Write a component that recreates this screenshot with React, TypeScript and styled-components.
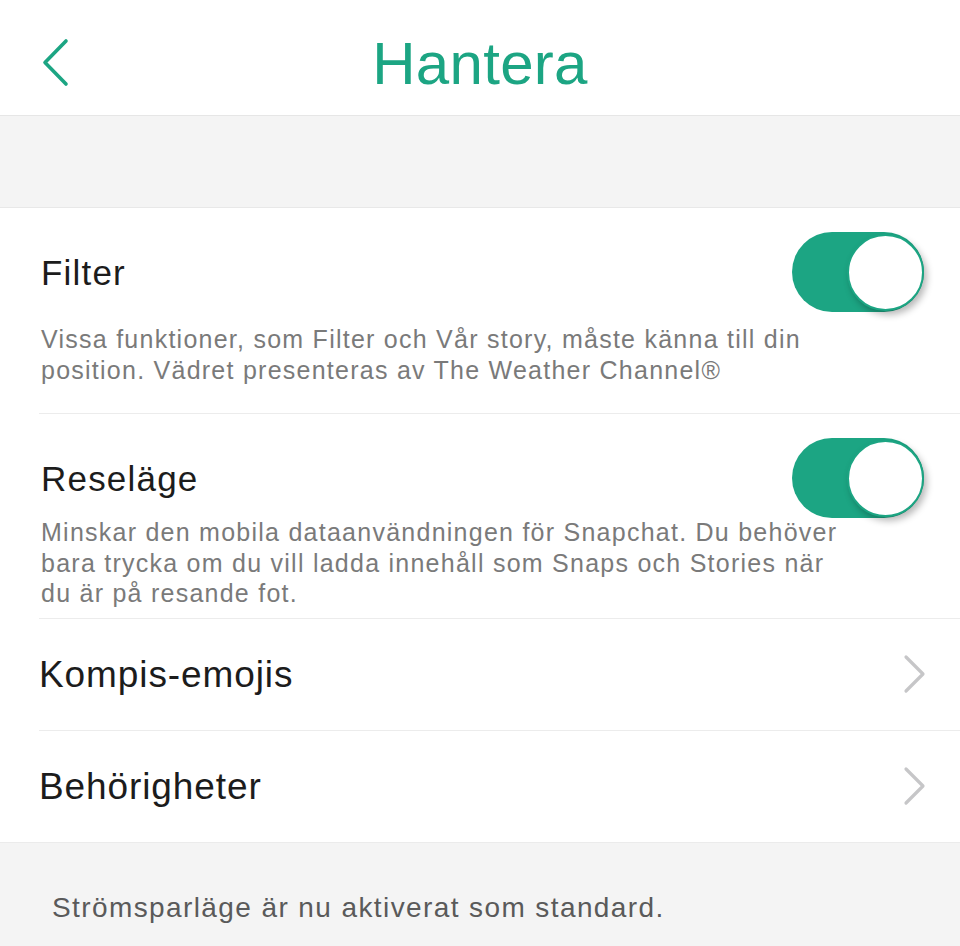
import React from "react";
import styled, { createGlobalStyle } from "styled-components";

const GREEN = "#1ca583";

const GlobalStyle = createGlobalStyle`
    html, body {
        margin: 0;
        padding: 0;
        background: #f4f4f4;
    }
    body {
        font-family: "Liberation Sans", Arial, Helvetica, sans-serif;
        -webkit-font-smoothing: antialiased;
    }
`;

const BackIcon = () => (
    <svg width="30" height="50" viewBox="0 0 30 50">
        <polyline
            points="25,3 4,24.5 25,46"
            fill="none"
            stroke={GREEN}
            strokeWidth="3.6"
            strokeLinecap="round"
            strokeLinejoin="round"
        />
    </svg>
);

const ChevronIcon = () => (
    <svg width="24" height="40" viewBox="0 0 24 40">
        <polyline
            points="4,3 21,20 4,37"
            fill="none"
            stroke="#c6c6c8"
            strokeWidth="3.2"
            strokeLinecap="round"
            strokeLinejoin="round"
        />
    </svg>
);

type ToggleRowProps = {
    title: string;
    text: string;
    textGap: number;
    bottom: number;
};

const ToggleRow = ({ title, text, textGap, bottom }: ToggleRowProps) => (
    <ToggleItem $bottom={bottom}>
        <ToggleHead>
            <ToggleTitle>{title}</ToggleTitle>
            <Switch>
                <Knob />
            </Switch>
        </ToggleHead>
        <Description $gap={textGap}>{text}</Description>
    </ToggleItem>
);

const App = () => {
    return (
        <Page>
            <GlobalStyle />
            <Header>
                <BackButton>
                    <BackIcon />
                </BackButton>
                <Title>Hantera</Title>
            </Header>
            <Spacer />
            <Section>
                <ToggleRow
                    title="Filter"
                    text={
                        "Vissa funktioner, som Filter och Vår story, måste känna till din\nposition. Vädret presenteras av The Weather Channel®"
                    }
                    textGap={12}
                    bottom={28}
                />
                <Divider />
                <ToggleRow
                    title="Reseläge"
                    text={
                        "Minskar den mobila dataanvändningen för Snapchat. Du behöver\nbara trycka om du vill ladda innehåll som Snaps och Stories när\ndu är på resande fot."
                    }
                    textGap={-1}
                    bottom={9}
                />
                <Divider />
                <NavRow>
                    <NavLabel>Kompis-emojis</NavLabel>
                    <ChevronIcon />
                </NavRow>
                <Divider />
                <NavRow>
                    <NavLabel>Behörigheter</NavLabel>
                    <ChevronIcon />
                </NavRow>
            </Section>
            <Footer>
                <FooterText>Strömsparläge är nu aktiverat som standard.</FooterText>
            </Footer>
        </Page>
    );
};

export default App;

const Page = styled.div`
    display: flex;
    flex-direction: column;
    min-height: 100vh;
    background: #f4f4f4;
`;

const Header = styled.header`
    height: 115px;
    background: #fff;
    border-bottom: 1px solid #e6e6e6;
    display: grid;
    grid-template-columns: 120px 1fr 120px;
    align-items: center;
`;

const BackButton = styled.div`
    display: flex;
    align-items: center;
    padding-left: 41px;
    padding-top: 11px;
    cursor: pointer;
`;

const Title = styled.h1`
    margin: 0;
    text-align: center;
    color: ${GREEN};
    font-size: 60px;
    font-weight: 400;
    letter-spacing: 0.3px;
    padding-top: 12px;
`;

const Spacer = styled.div`
    height: 91px;
    background: #f4f4f4;
    border-bottom: 1px solid #e8e8e8;
`;

const Section = styled.section`
    background: #fff;
    display: flex;
    flex-direction: column;
`;

const ToggleItem = styled.div<{ $bottom: number }>`
    padding: 24px 36px ${(p) => p.$bottom}px 41px;
`;

const ToggleHead = styled.div`
    display: flex;
    align-items: center;
    justify-content: space-between;
    height: 80px;
`;

const ToggleTitle = styled.span`
    font-size: 35px;
    color: #1c1c1c;
    letter-spacing: 1.2px;
    padding-top: 2px;
`;

const Switch = styled.div`
    width: 132px;
    height: 80px;
    border-radius: 40px;
    background: ${GREEN};
    display: flex;
    align-items: center;
    justify-content: flex-end;
`;

const Knob = styled.div`
    width: 73px;
    height: 73px;
    border-radius: 50%;
    background: #fff;
    border: 2px solid ${GREEN};
    box-shadow: 3px 4px 7px rgba(0, 0, 0, 0.28);
`;

const Description = styled.p<{ $gap: number }>`
    margin: ${(p) => p.$gap}px 0 0;
    font-size: 25px;
    line-height: 30.5px;
    color: #7a7a7a;
    letter-spacing: 1.25px;
    white-space: pre-line;
`;

const Divider = styled.div`
    height: 1px;
    margin-left: 39px;
    background: #ececec;
`;

const NavRow = styled.div`
    height: 111px;
    display: flex;
    align-items: center;
    justify-content: space-between;
    padding: 0 34px 0 39px;
    cursor: pointer;
`;

const NavLabel = styled.span`
    font-size: 37px;
    color: #1c1c1c;
    letter-spacing: 0.9px;
    padding-top: 2px;
`;

const Footer = styled.footer`
    flex: 1;
    background: #f4f4f4;
    border-top: 1px solid #ebebeb;
    padding: 49px 0 0 52px;
`;

const FooterText = styled.p`
    margin: 0;
    font-size: 28px;
    color: #5a5a5a;
    letter-spacing: 1.4px;
`;
